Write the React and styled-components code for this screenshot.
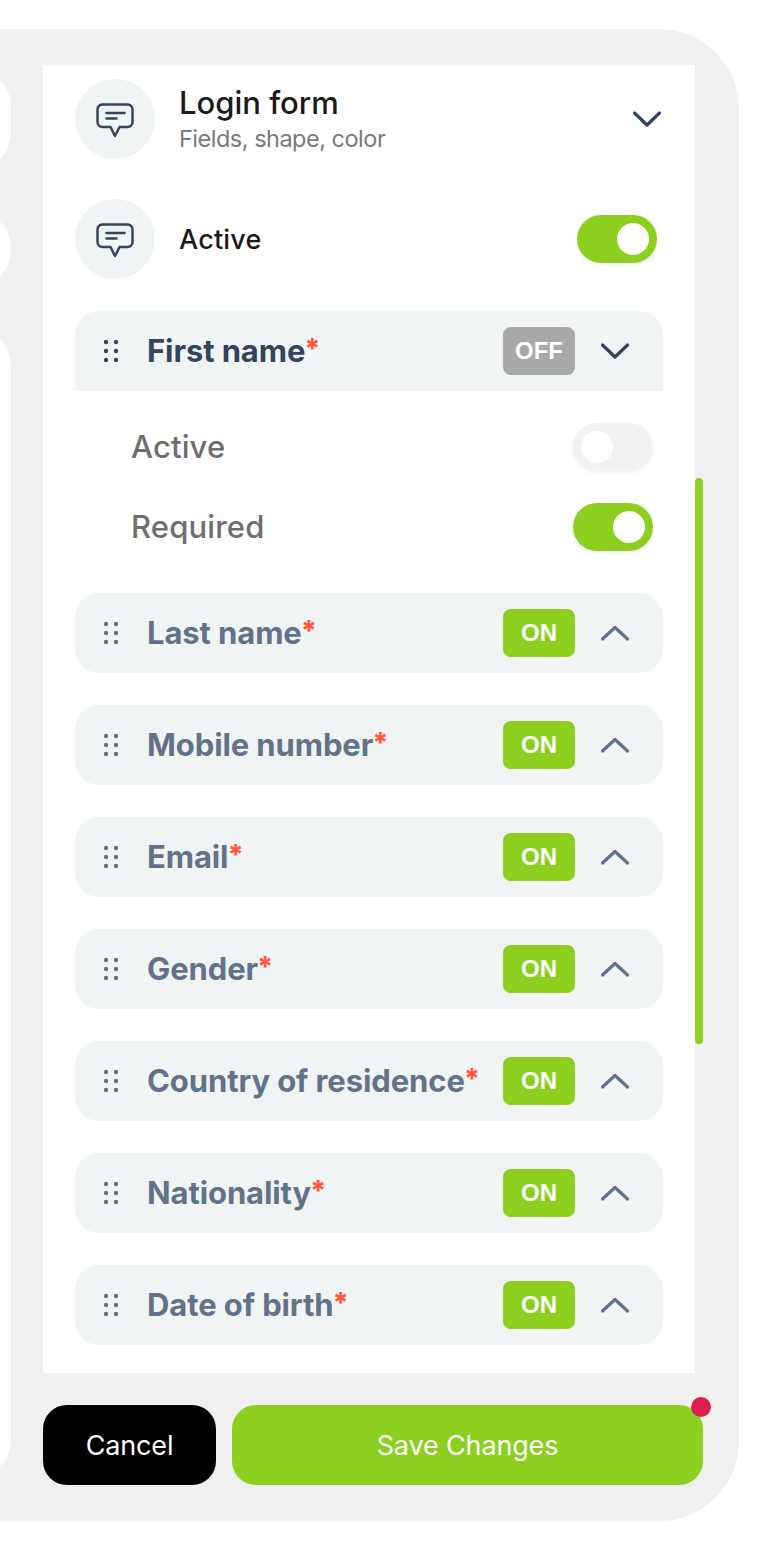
import React from "react";
import styled, { createGlobalStyle } from "styled-components";

const GlobalStyle = createGlobalStyle`
  html, body {
    margin: 0;
    padding: 0;
    background: #fff;
  }
  #root {
    padding-top: 29px;
    font-family: "Inter", "Noto Sans", sans-serif;
  }
  * {
    box-sizing: border-box;
  }
`;

const Panel = styled.div`
  display: flex;
  width: 739px;
  height: 1492px;
  padding: 36px 36px 36px 0;
  gap: 32px;
  background: #f0f0f0;
  border-radius: 0 80px 80px 0;
`;

const Rail = styled.div`
  display: flex;
  flex-direction: column;
  flex-shrink: 0;
  width: 11px;
  padding-top: 2px;
  gap: 37px;
  overflow: hidden;
`;

const RailCard = styled.div`
  flex-shrink: 0;
  width: 91px;
  height: ${(p) => p.$h}px;
  margin-left: -80px;
  background: #fff;
  border-radius: 40px;
`;

const Main = styled.div`
  display: flex;
  flex-direction: column;
  width: 660px;
  gap: 32px;
`;

const ScrollArea = styled.div`
  display: flex;
  height: 1308px;
`;

const Content = styled.div`
  width: 652px;
  padding: 14px 32px 28px;
  background: #fff;
`;

const Thumb = styled.div`
  width: 8px;
  height: 566px;
  margin-top: 413px;
  background: #8ccf1f;
  border-radius: 4px;
`;

const HeadRow = styled.div`
  display: flex;
  align-items: center;
  height: 80px;
  margin-bottom: ${(p) => p.$mb}px;
`;

const IconCircle = styled.div`
  display: flex;
  align-items: center;
  justify-content: center;
  width: 80px;
  height: 80px;
  margin-right: 25px;
  flex-shrink: 0;
  background: #f0f4f5;
  border-radius: 50%;
`;

const HeadText = styled.div`
  display: flex;
  flex-direction: column;
  flex: 1;
`;

const Title = styled.div`
  font-size: 31px;
  font-weight: 500;
  line-height: 40px;
  margin-left: -1px;
  color: #1a1a1a;
`;

const Subtitle = styled.div`
  font-size: 23.5px;
  line-height: 32px;
  margin-left: -1px;
  letter-spacing: -0.5px;
  color: #7a7a7a;
`;

const ActiveLabel = styled.div`
  flex: 1;
  margin-left: -1px;
  font-size: 27px;
  font-weight: 500;
  letter-spacing: 0.2px;
  color: #1a1a1a;
`;

const ToggleTrack = styled.div`
  display: flex;
  align-items: center;
  justify-content: ${(p) => (p.$on ? "flex-end" : "flex-start")};
  width: 80px;
  height: 48px;
  padding: 0 8px;
  margin-right: ${(p) => p.$mr || 0}px;
  background: ${(p) => (p.$on ? "#8ccf1f" : "#f0f1f3")};
  border-radius: 24px;
  box-shadow: 0 2px 4px rgba(0, 0, 0, 0.05);
`;

const ToggleKnob = styled.div`
  width: 32px;
  height: 32px;
  background: #fff;
  border-radius: 50%;
`;

const FieldList = styled.div`
  display: flex;
  flex-direction: column;
  gap: 32px;
`;

const FieldRow = styled.div`
  display: flex;
  align-items: center;
  width: 588px;
  height: 80px;
  padding: 0 32px 0 28px;
  background: #f0f4f5;
  border-radius: ${(p) => (p.$open ? "24px 24px 0 0" : "24px")};
  color: ${(p) => (p.$open ? "#33445c" : "#627389")};
`;

const FieldName = styled.div`
  flex: 1;
  margin: -2px 0 0 28px;
  font-size: 31px;
  font-weight: 700;
  letter-spacing: -0.1px;
  white-space: nowrap;
  color: inherit;
`;

const Star = styled.span`
  position: relative;
  top: -3px;
  margin-left: -1px;
  font-size: 28px;
  font-weight: 800;
  line-height: 0;
  letter-spacing: 0;
  color: #ff5a3c;
`;

const Badge = styled.div`
  display: flex;
  align-items: center;
  justify-content: center;
  width: 72px;
  height: 48px;
  margin-right: 24px;
  flex-shrink: 0;
  font-family: "Liberation Sans", sans-serif;
  font-size: 24px;
  font-weight: 700;
  color: #fff;
  background: ${(p) => (p.$on ? "#8ccf1f" : "#a8a8a8")};
  border-radius: 8px;
`;

const Expanded = styled.div`
  display: flex;
  flex-direction: column;
  gap: 32px;
  width: 588px;
  padding: 32px 10px 42px 57px;
`;

const OptionRow = styled.div`
  display: flex;
  align-items: center;
  justify-content: space-between;
  height: 48px;
`;

const OptionLabel = styled.div`
  margin: -2px 0 0 -1px;
  font-size: 31px;
  font-weight: 500;
  letter-spacing: 0.15px;
  color: #6e6e6e;
`;

const Footer = styled.div`
  display: flex;
  gap: 16px;
`;

const Button = styled.button`
  position: relative;
  flex: ${(p) => (p.$primary ? 1 : "none")};
  width: ${(p) => (p.$primary ? "auto" : "173px")};
  height: 80px;
  padding: 0;
  border: 0;
  border-radius: 24px;
  font-family: inherit;
  font-size: 27px;
  letter-spacing: -0.15px;
  color: #fff;
  background: ${(p) => (p.$primary ? "#8ccf1f" : "#000")};
`;

const Dot = styled.span`
  position: absolute;
  top: -8px;
  right: -8px;
  width: 20px;
  height: 20px;
  background: #dc1f50;
  border-radius: 50%;
`;

const ChatIcon = () => (
  <svg width="40" height="40" viewBox="0 0 40 40" fill="none" stroke="#33445c" strokeWidth="2.5" strokeLinecap="round" strokeLinejoin="round">
    <path d="M7.5 5.5h25a5 5 0 0 1 5 5V23a5 5 0 0 1-5 5h-8L20 37l-4.5-9h-8a5 5 0 0 1-5-5V10.5a5 5 0 0 1 5-5Z" />
    <path d="M11.5 14h18M11.5 19.5h10" />
  </svg>
);

const Grip = () => (
  <svg width="16" height="24" viewBox="0 0 16 24" fill="currentColor">
    <circle cx="3" cy="3" r="2.2" />
    <circle cx="13" cy="3" r="2.2" />
    <circle cx="3" cy="12" r="2.2" />
    <circle cx="13" cy="12" r="2.2" />
    <circle cx="3" cy="21" r="2.2" />
    <circle cx="13" cy="21" r="2.2" />
  </svg>
);

const Chevron = ({ up, color }) => (
  <svg width="32" height="32" viewBox="0 0 32 32" fill="none" stroke={color || "currentColor"} strokeWidth="3.2" strokeLinecap="round" strokeLinejoin="round">
    <path d={up ? "M3.5 22L16 10.5L28.5 22" : "M3.5 10L16 22L28.5 10"} />
  </svg>
);

const Toggle = ({ on, mr }) => (
  <ToggleTrack $on={on} $mr={mr}>
    <ToggleKnob />
  </ToggleTrack>
);

const fields = [
  "Last name",
  "Mobile number",
  "Email",
  "Gender",
  "Country of residence",
  "Nationality",
  "Date of birth",
];

export default function App() {
  return (
    <>
      <GlobalStyle />
      <Panel>
        <Rail>
          <RailCard $h={105} />
          <RailCard $h={80} />
          <RailCard $h={1153} />
        </Rail>
        <Main>
          <ScrollArea>
            <Content>
              <HeadRow $mb={40}>
                <IconCircle>
                  <ChatIcon />
                </IconCircle>
                <HeadText>
                  <Title>Login form</Title>
                  <Subtitle>Fields, shape, color</Subtitle>
                </HeadText>
                <Chevron color="#33445c" />
              </HeadRow>
              <HeadRow $mb={32}>
                <IconCircle>
                  <ChatIcon />
                </IconCircle>
                <ActiveLabel>Active</ActiveLabel>
                <Toggle on mr={6} />
              </HeadRow>
              <FieldRow $open>
                <Grip />
                <FieldName>
                  First name<Star>*</Star>
                </FieldName>
                <Badge>OFF</Badge>
                <Chevron />
              </FieldRow>
              <Expanded>
                <OptionRow>
                  <OptionLabel>Active</OptionLabel>
                  <Toggle />
                </OptionRow>
                <OptionRow>
                  <OptionLabel>Required</OptionLabel>
                  <Toggle on />
                </OptionRow>
              </Expanded>
              <FieldList>
                {fields.map((name) => (
                  <FieldRow key={name}>
                    <Grip />
                    <FieldName>
                      {name}
                      <Star>*</Star>
                    </FieldName>
                    <Badge $on>ON</Badge>
                    <Chevron up />
                  </FieldRow>
                ))}
              </FieldList>
            </Content>
            <Thumb />
          </ScrollArea>
          <Footer>
            <Button>Cancel</Button>
            <Button $primary>
              Save Changes
              <Dot />
            </Button>
          </Footer>
        </Main>
      </Panel>
    </>
  );
}
